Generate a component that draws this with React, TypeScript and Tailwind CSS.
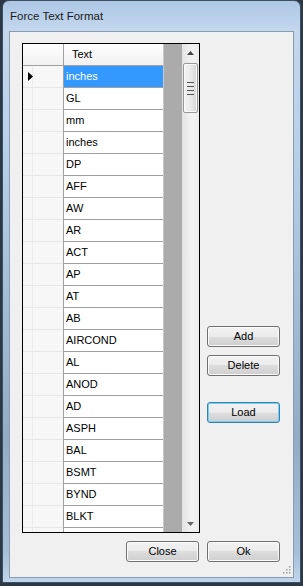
import React from "react";

const rows = [
  "inches", "GL", "mm", "inches", "DP", "AFF", "AW", "AR", "ACT", "AP", "AT",
  "AB", "AIRCOND", "AL", "ANOD", "AD", "ASPH", "BAL", "BSMT", "BYND", "BLKT", "",
];

function Btn({ label, focus }: { label: string; focus?: boolean }) {
  return (
    <div
      className={`w-[73px] h-[21px] shrink-0 rounded-[3px] border flex items-center justify-center text-[11px] leading-none text-black bg-[linear-gradient(#f2f2f2_0%,#ebebeb_50%,#dddddd_50%,#cfcfcf_100%)] ${
        focus
          ? "border-[#3c7fb1] shadow-[inset_0_0_0_1px_#6fd0f5]"
          : "border-[#707070] shadow-[inset_0_0_0_1px_#fbfbfb]"
      }`}
    >
      {label}
    </div>
  );
}

export default function App() {
  return (
    <div className="w-[303px] h-[586px] overflow-hidden bg-[#2c3845] font-['Liberation_Sans',Arial,sans-serif]">
      <div className="ml-[2px] w-[299px] h-[583px] rounded-t-[7px] border border-[#3d4f63] bg-[linear-gradient(180deg,#adc7e5_0%,#c3d7ed_5%,#b9d0e9_25%,#a9c2dc_45%,#93abc4_75%,#a7bfd8_95%,#c0d6ec_100%)] flex flex-col">
        <div className="h-[30px] shrink-0 flex items-center pl-[7px] pt-[1px] text-[11.5px] text-[#1a1a1a]">
          Force Text Format
        </div>
        <div className="relative ml-[6px] w-[285px] h-[547px] border border-[#8a9cb0] bg-[#f0f0f0] pl-[12px] pt-[11px]">
          <div className="flex">
            {/* Grid */}
            <div className="w-[178px] h-[490px] border border-black flex overflow-hidden text-[11px] text-black">
              {/* Row header column */}
              <div className="w-[41px] shrink-0 border-r border-[#a0a0a0] flex flex-col bg-[#f7f7f7]">
                <div className="h-[22px] shrink-0 border-b border-[#a0a0a0] bg-[linear-gradient(#ffffff,#f1f1f1)]" />
                {rows.map((_, i) => (
                  <div key={i} className="h-[22px] shrink-0 border-b border-[#e6e6e6] flex">
                    <div className="w-[10px] border-r border-[#ececec] flex items-center justify-end">
                      {i === 0 && (
                        <svg width="5" height="9" viewBox="0 0 5 9" className="mr-[-1px]">
                          <path d="M0 0 L5 4.5 L0 9 Z" fill="#000" />
                        </svg>
                      )}
                    </div>
                  </div>
                ))}
              </div>
              {/* Text column */}
              <div className="w-[100px] shrink-0 border-r border-[#c8c8c8] flex flex-col bg-white">
                <div className="h-[22px] shrink-0 border-b border-[#a0a0a0] bg-[linear-gradient(#ffffff,#f1f1f1)] flex items-center pl-[8px]">
                  Text
                </div>
                {rows.map((r, i) => (
                  <div
                    key={i}
                    className={`h-[22px] shrink-0 border-b border-[#a0a0a0] flex items-center pl-[2px] ${
                      i === 0 ? "bg-[#3399ff] text-white" : ""
                    }`}
                  >
                    {r}
                  </div>
                ))}
              </div>
              {/* Empty area */}
              <div className="w-[18px] shrink-0 bg-[#ababab]" />
              {/* Scrollbar */}
              <div className="w-[17px] shrink-0 flex flex-col bg-[linear-gradient(90deg,#e4e4e4,#f3f3f3_60%,#ececec)]">
                <div className="h-[17px] shrink-0 flex items-center justify-center">
                  <svg width="7" height="4" viewBox="0 0 7 4">
                    <path d="M0 4 L3.5 0 L7 4 Z" fill="#444" />
                  </svg>
                </div>
                <div className="mt-[2px] mx-[1px] h-[50px] shrink-0 rounded-[2px] border border-[#979797] bg-[linear-gradient(90deg,#f4f4f4,#e9e9e9_50%,#d6d6d6)] shadow-[inset_0_0_0_1px_#fafafa] flex flex-col items-center justify-center gap-[1px]">
                  <div className="w-[7px] h-[1px] bg-[#555]" />
                  <div className="w-[7px] h-[1px] bg-[#e8e8e8]" />
                  <div className="w-[7px] h-[1px] bg-[#555]" />
                  <div className="w-[7px] h-[1px] bg-[#e8e8e8]" />
                  <div className="w-[7px] h-[1px] bg-[#555]" />
                  <div className="w-[7px] h-[1px] bg-[#e8e8e8]" />
                  <div className="w-[7px] h-[1px] bg-[#555]" />
                </div>
                <div className="flex-1" />
                <div className="h-[17px] shrink-0 flex items-center justify-center">
                  <svg width="7" height="4" viewBox="0 0 7 4">
                    <path d="M0 0 L3.5 4 L7 0 Z" fill="#666" />
                  </svg>
                </div>
              </div>
            </div>
            {/* Right buttons */}
            <div className="ml-[7px] pt-[283px] flex flex-col text-[11px]">
              <Btn label="Add" />
              <div className="h-[8px]" />
              <Btn label="Delete" />
              <div className="h-[26px]" />
              <Btn label="Load" focus />
            </div>
          </div>
          <div className="mt-[8px] w-[258px] flex justify-end gap-[8px]">
            <Btn label="Close" />
            <Btn label="Ok" />
          </div>
          {/* Resize grip */}
          <svg width="9" height="9" viewBox="0 0 9 9" className="absolute right-[2px] bottom-[3px]">
            <rect x="7" y="1" width="1.5" height="1.5" fill="#a0a0a0" />
            <rect x="4" y="4" width="1.5" height="1.5" fill="#a0a0a0" />
            <rect x="7" y="4" width="1.5" height="1.5" fill="#a0a0a0" />
            <rect x="1" y="7" width="1.5" height="1.5" fill="#a0a0a0" />
            <rect x="4" y="7" width="1.5" height="1.5" fill="#a0a0a0" />
            <rect x="7" y="7" width="1.5" height="1.5" fill="#a0a0a0" />
          </svg>
        </div>
      </div>
    </div>
  );
}
